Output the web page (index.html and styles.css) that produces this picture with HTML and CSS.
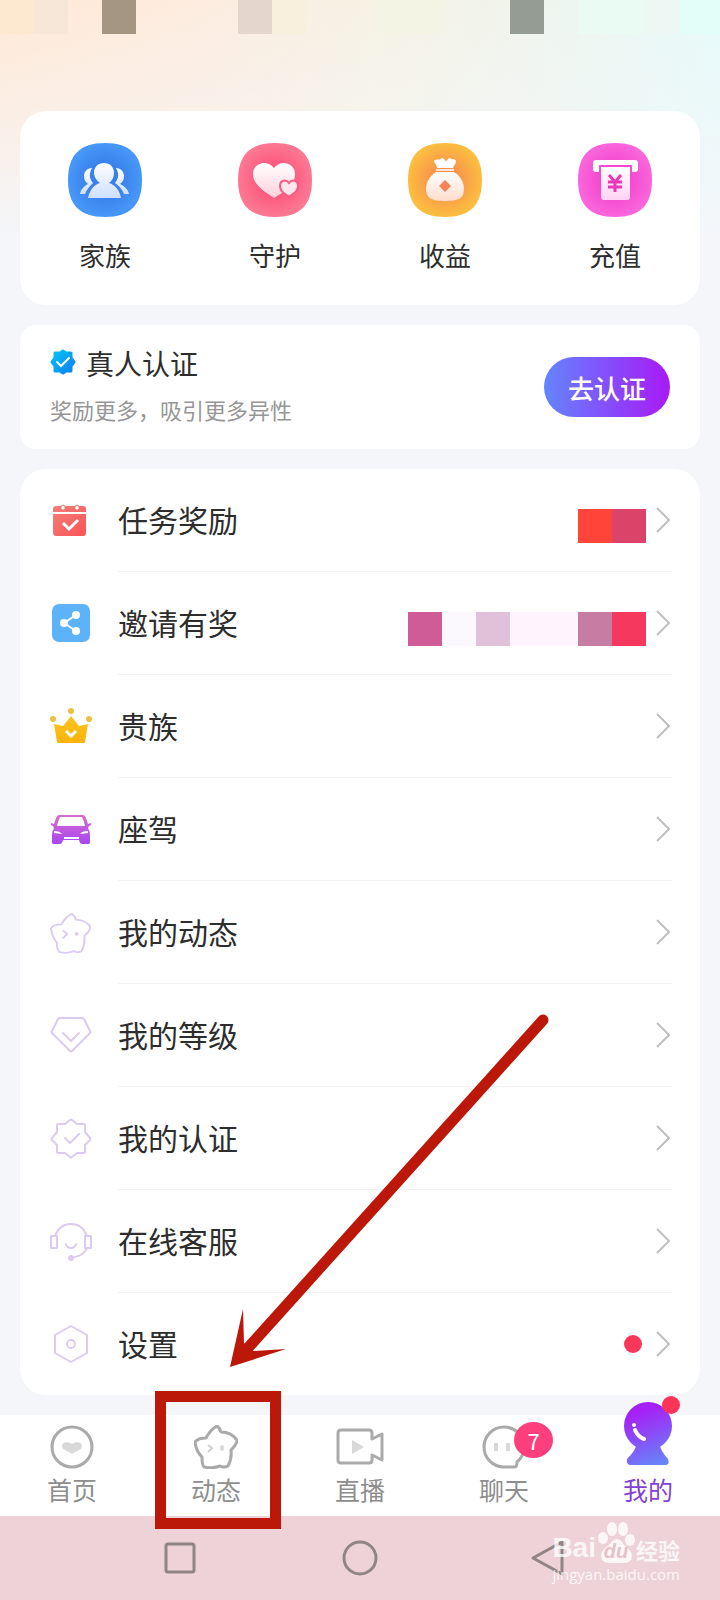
FILE: index.html
```html
<!DOCTYPE html>
<html lang="zh-CN">
<head>
<meta charset="utf-8">
<meta name="viewport" content="width=device-width, initial-scale=1">
<title>我的</title>
<link rel="stylesheet" href="styles.css">
</head>
<body>
<div class="screen">
  <header class="status" aria-hidden="true">
    <span class="cell c-sand"></span><span class="cell c-oat"></span><span class="cell"></span><span class="cell c-brown"></span><span class="cell"></span><span class="cell"></span><span class="cell"></span><span class="cell c-rose"></span><span class="cell c-cream"></span><span class="cell"></span><span class="cell"></span><span class="cell c-lime"></span><span class="cell c-lime"></span><span class="cell"></span><span class="cell"></span><span class="cell c-gray"></span><span class="cell"></span><span class="cell c-mint"></span><span class="cell c-mint"></span><span class="cell c-fog"></span><span class="cell c-aqua"></span>
  </header>

  <main class="content">
    <nav class="card shortcuts">
      <a class="shortcut" href="#">
        <svg class="tile" viewBox="0 0 74 74">
          <defs>
            <radialGradient id="gBlue"><stop offset="0.4" stop-color="#3880ea"/><stop offset="1" stop-color="#4797f9"/></radialGradient>
            <linearGradient id="gIce" x1="0" y1="0" x2="0" y2="1"><stop offset="0" stop-color="#fff"/><stop offset="1" stop-color="#cfdffb"/></linearGradient>
          </defs>
          <path fill="url(#gBlue)" d="M37 0C62 0 74 12 74 37S62 74 37 74 0 62 0 37 12 0 37 0Z"/>
          <path fill="url(#gIce)" d="M24 25c-5 0-8 4-8 8 0 3 1 6 4 8-4 2-7 5-8 10h5c2-5 5-8 8-11-4-5-4-10-1-15ZM48 25c5 0 8 4 8 8 0 3-1 6-4 8 4 2 8 5 9 10h-5c-2-5-5-8-9-11 4-5 4-10 1-15Z"/>
          <path fill="url(#gIce)" d="M36 20c6 0 10 4 10 10 0 4-2 8-5 10 6 2 10 6 12 15H20c2-9 6-13 12-15-3-2-6-6-6-10 0-6 4-10 10-10Z"/>
        </svg>
        <span class="shortcut-name">家族</span>
      </a>
      <a class="shortcut" href="#">
        <svg class="tile" viewBox="0 0 74 74">
          <defs>
            <radialGradient id="gPink"><stop offset="0.3" stop-color="#fb5379"/><stop offset="1" stop-color="#fc7893"/></radialGradient>
            <linearGradient id="gBlush" x1="0" y1="0" x2="0" y2="1"><stop offset="0" stop-color="#fff"/><stop offset="1" stop-color="#ffd0da"/></linearGradient>
          </defs>
          <path fill="url(#gPink)" d="M37 0C62 0 74 12 74 37S62 74 37 74 0 62 0 37 12 0 37 0Z"/>
          <path fill="url(#gBlush)" d="M36 55C25 48 15 41 15 31c0-11 14-15 21-6 7-9 21-5 21 6 0 12-10 17-21 24Z"/>
          <path fill="#ffe6ec" stroke="#f75c80" stroke-width="2" d="M51 54c-5-4-9-6-9-11 0-6 6-7 9-3 3-4 9-3 9 3 0 5-4 7-9 11Z"/>
        </svg>
        <span class="shortcut-name">守护</span>
      </a>
      <a class="shortcut" href="#">
        <svg class="tile" viewBox="0 0 74 74">
          <defs>
            <radialGradient id="gGold"><stop offset="0.3" stop-color="#f7914d"/><stop offset="1" stop-color="#fcbe3f"/></radialGradient>
            <linearGradient id="gCream" x1="0" y1="0" x2="0" y2="1"><stop offset="0" stop-color="#fff"/><stop offset="1" stop-color="#ffdccb"/></linearGradient>
          </defs>
          <path fill="url(#gGold)" d="M37 0C62 0 74 12 74 37S62 74 37 74 0 62 0 37 12 0 37 0Z"/>
          <path fill="#fff" d="M29 25c0-3-3-5-3-7 2-3 6 0 8-3 2 0 3 3 4 3s2-3 4-3c1 2 5 0 6 3 0 3-2 4-3 7Z"/>
          <path fill="#ffe3d4" d="M28 26h18v2H28Z"/>
          <path fill="url(#gCream)" d="M28 29h18c6 4 10 10 10 17 0 9-5 12-19 12s-19-3-19-12c0-7 4-13 10-17Z"/>
          <path fill="#f68355" d="m37 37 6 6-6 6-6-6Z"/>
        </svg>
        <span class="shortcut-name">收益</span>
      </a>
      <a class="shortcut" href="#">
        <svg class="tile" viewBox="0 0 74 74">
          <defs>
            <radialGradient id="gMagenta"><stop offset="0.3" stop-color="#f144cc"/><stop offset="1" stop-color="#fb65dc"/></radialGradient>
            <linearGradient id="gPetal" x1="0" y1="0" x2="0" y2="1"><stop offset="0" stop-color="#fff"/><stop offset="1" stop-color="#ffd3f5"/></linearGradient>
          </defs>
          <path fill="url(#gMagenta)" d="M37 0C62 0 74 12 74 37S62 74 37 74 0 62 0 37 12 0 37 0Z"/>
          <path fill="#fff" d="M18 17h39q3 0 3 3v6q0 3-3 3h-3v-7H21v7h-3q-3 0-3-3v-6q0-3 3-3Z"/>
          <path fill="url(#gPetal)" d="M23 24h29v30q0 3-3 3H26q-3 0-3-3Z"/>
          <path fill="none" stroke="#e838b8" stroke-width="3" d="m31 32 6 7 6-7M30 39h14M30 44h14M37 39v10"/>
        </svg>
        <span class="shortcut-name">充值</span>
      </a>
    </nav>

    <section class="card verify">
      <div class="verify-text">
        <h2 class="verify-title">
          <svg class="seal" viewBox="0 0 26 26">
            <defs><linearGradient id="gSeal" x1="0" y1="0" x2="1" y2="1"><stop offset="0" stop-color="#06c6f4"/><stop offset="1" stop-color="#0a7ef5"/></linearGradient></defs>
            <path fill="url(#gSeal)" stroke="url(#gSeal)" stroke-width="3" stroke-linejoin="round" d="m13 2 3 2h5v5l3 4-3 4v5h-5l-3 2-3-2H5v-5l-3-4 3-4V4h5Z"/>
            <path fill="none" stroke="#fff" stroke-width="2" stroke-linecap="round" d="m7 13 4 4 8-8"/>
          </svg>
          真人认证
        </h2>
        <p class="verify-note">奖励更多，吸引更多异性</p>
      </div>
      <button class="verify-button" type="button">去认证</button>
    </section>

    <ul class="card menu">
      <li class="menu-item">
        <svg class="menu-icon" viewBox="0 0 42 42">
          <defs><linearGradient id="gRed" x1="0" y1="0" x2="1" y2="1"><stop offset="0" stop-color="#f08078"/><stop offset="1" stop-color="#fb5358"/></linearGradient></defs>
          <path fill="url(#gRed)" d="M6 6h5v2q2 3 4 0V6h10v2q2 3 4 0V6h4q3 0 3 3v3H3V9q0-3 3-3ZM3 14h33v18q0 4-3 4H6q-3 0-3-4Z"/>
          <path fill="none" stroke="#ee7772" stroke-width="1" d="M11 8V6q2-2 4 0v2M25 8V6q2-2 4 0v2"/>
          <path fill="none" stroke="#fff" stroke-width="3" d="m13 23 6 6 9-9"/>
        </svg>
        <a class="menu-link" href="#"><span>任务奖励</span>
          <span class="mosaic"><i class="block m-red"></i><i class="block m-crimson"></i></span>
          <svg class="chevron" viewBox="0 0 14 26"><path d="m1 1 12 12L1 25"/></svg></a>
      </li>
      <li class="menu-item">
        <svg class="menu-icon" viewBox="0 0 42 42">
          <rect x="2" y="1" width="38" height="38" rx="7" fill="#5cb3fa"/>
          <path fill="none" stroke="#fff" stroke-width="2" d="M26 12 14 20l12 8"/>
          <circle cx="26" cy="12" r="4" fill="#fff"/><circle cx="14" cy="20" r="4" fill="#fff"/><circle cx="26" cy="28" r="4" fill="#fff"/>
        </svg>
        <a class="menu-link" href="#"><span>邀请有奖</span>
          <span class="mosaic"><i class="block m-plum"></i><i class="block m-pale"></i><i class="block m-lilac"></i><i class="block m-blush"></i><i class="block m-blush"></i><i class="block m-mauve"></i><i class="block m-scarlet"></i></span>
          <svg class="chevron" viewBox="0 0 14 26"><path d="m1 1 12 12L1 25"/></svg></a>
      </li>
      <li class="menu-item">
        <svg class="menu-icon" viewBox="0 0 42 42">
          <defs><linearGradient id="gCrown" x1="0" y1="0" x2="0" y2="1"><stop offset="0" stop-color="#f9c41f"/><stop offset="1" stop-color="#fcb30c"/></linearGradient></defs>
          <path fill="url(#gCrown)" d="m4 18 9 2 8-10 8 10 9-2-3 18q0 1-1 1H8q-1 0-1-1Z"/>
          <g fill="#ecc044"><circle cx="21" cy="5" r="3"/><circle cx="3" cy="13" r="3"/><circle cx="39" cy="13" r="3"/></g>
          <path fill="none" stroke="#fff" stroke-width="3" d="m16 25 5 5 5-5"/>
        </svg>
        <a class="menu-link" href="#"><span>贵族</span>
          <svg class="chevron" viewBox="0 0 14 26"><path d="m1 1 12 12L1 25"/></svg></a>
      </li>
      <li class="menu-item">
        <svg class="menu-icon" viewBox="0 0 42 42">
          <defs><linearGradient id="gCar" x1="0" y1="0" x2="0" y2="1"><stop offset="0" stop-color="#d66fcb"/><stop offset="1" stop-color="#a846f2"/></linearGradient></defs>
          <path fill="url(#gCar)" fill-rule="evenodd" d="M9 6h24q2 0 3 3l2 6 3-1q1 2-2 3l-1 2q2 3 2 8v7q0 1-2 1h-6q-2 0-3-4H13q-1 4-3 4H4q-2 0-2-1v-7q0-5 2-8l-1-2q-3-1-2-3l3 1 2-6q1-3 3-3Zm1 2q-2 4-3 9h28q-1-5-3-9ZM4 22v2l8 1q-2-3-8-3Zm34 0q-6 0-8 3l8-1ZM14 28v2h15v-2Z"/>
        </svg>
        <a class="menu-link" href="#"><span>座驾</span>
          <svg class="chevron" viewBox="0 0 14 26"><path d="m1 1 12 12L1 25"/></svg></a>
      </li>
      <li class="menu-item">
        <svg class="menu-icon outline" viewBox="0 0 44 44">
          <path d="M23 2q3 2 4 6 9 0 15 7 1 4-6 10 1 9-3 16-4 2-8 0-8 3-15 1-3-2-3-10-5-6-6-15 3-4 11-4 5-9 11-11Z"/>
          <path d="m14 20 4 3-4 4"/><circle class="dot" cx="28" cy="23" r="1"/>
        </svg>
        <a class="menu-link" href="#"><span>我的动态</span>
          <svg class="chevron" viewBox="0 0 14 26"><path d="m1 1 12 12L1 25"/></svg></a>
      </li>
      <li class="menu-item">
        <svg class="menu-icon outline" viewBox="0 0 42 42">
          <path d="M10 3h22q1 0 2 1l6 12q1 1 0 2L22 36q-1 1-2 0L2 18q-1-1 0-2L8 4q1-1 2-1Z"/><path d="m13 18 8 8 8-8"/>
        </svg>
        <a class="menu-link" href="#"><span>我的等级</span>
          <svg class="chevron" viewBox="0 0 14 26"><path d="m1 1 12 12L1 25"/></svg></a>
      </li>
      <li class="menu-item">
        <svg class="menu-icon outline" viewBox="0 0 42 42">
          <path d="M20 2q1-1 2 0l5 4h7q1 0 1 1v7l5 6q1 1 0 2l-5 5v7q0 1-1 1h-7l-5 4q-1 1-2 0l-5-4H8q-1 0-1-1v-7l-5-5q-1-1 0-2l5-6V7q0-1 1-1h7Z"/><path d="m15 20 5 5 9-9"/>
        </svg>
        <a class="menu-link" href="#"><span>我的认证</span>
          <svg class="chevron" viewBox="0 0 14 26"><path d="m1 1 12 12L1 25"/></svg></a>
      </li>
      <li class="menu-item">
        <svg class="menu-icon outline" viewBox="0 0 42 42">
          <path d="M5 15C8 7 14 3 21 3s13 4 16 12M1 15h6v12H1ZM35 15h6v12h-6ZM37 27q-3 8-16 10M16 23q1 4 5 4t5-4"/><circle class="dot" cx="21" cy="37" r="2"/>
        </svg>
        <a class="menu-link" href="#"><span>在线客服</span>
          <svg class="chevron" viewBox="0 0 14 26"><path d="m1 1 12 12L1 25"/></svg></a>
      </li>
      <li class="menu-item">
        <svg class="menu-icon outline" viewBox="0 0 42 42">
          <path d="m21 3 16 9v18l-16 9-16-9V12Z"/><circle cx="21" cy="21" r="4"/>
        </svg>
        <a class="menu-link" href="#"><span>设置</span>
          <span class="alert"></span>
          <svg class="chevron" viewBox="0 0 14 26"><path d="m1 1 12 12L1 25"/></svg></a>
      </li>
    </ul>

    <svg class="arrow" viewBox="0 0 320 352">
      <path stroke="#bc180a" stroke-width="11" stroke-linecap="round" d="M313 5 17 334"/>
      <path fill="#bc180a" d="m0 352 13-58 1 34 9 8 33-2Z"/>
    </svg>
  </main>

  <nav class="tabs">
    <a class="tab" href="#">
      <svg class="tab-icon" viewBox="0 0 44 44"><circle cx="22" cy="22" r="20"/><path class="soft" d="M22 29c-4-3-10-4-10-8s7-5 10-2c3-3 10-2 10 2s-6 5-10 8Z"/></svg>
      <span>首页</span>
    </a>
    <a class="tab" href="#">
      <svg class="tab-icon" viewBox="0 0 44 44"><path d="M23 1q3 2 4 6 10 0 16 8 0 4-6 10 1 9-3 16-4 2-8 0-8 3-16 1-2-2-2-10-6-6-7-15 3-4 11-4 5-9 11-12Z"/><path class="soft-line" d="m14 20 4 3-4 4"/><ellipse class="soft" cx="28" cy="23" rx="2" ry="3"/></svg>
      <span>动态</span>
      <i class="frame"></i>
    </a>
    <a class="tab" href="#">
      <svg class="tab-icon wide" viewBox="0 0 48 44"><path d="M5 5h28q3 0 3 3v6l10-5v26l-10-5v5q0 3-3 3H5q-3 0-3-3V8q0-3 3-3Z"/><path class="soft" d="m16 15 12 7-12 7Z"/></svg>
      <span>直播</span>
    </a>
    <a class="tab" href="#">
      <svg class="tab-icon" viewBox="0 0 44 44"><path d="M22 2a20 20 0 1 0 0 40h11q2 0 2-5 7-6 7-15A20 20 0 0 0 22 2Z"/><path class="soft" d="M12 18h4v8h-4ZM24 18h4v8h-4Z"/></svg>
      <span>聊天</span>
      <b class="badge">7</b>
    </a>
    <a class="tab active" href="#">
      <svg class="orb" viewBox="0 0 48 63">
        <defs><linearGradient id="gOrb" gradientUnits="userSpaceOnUse" x1="14" y1="4" x2="36" y2="62"><stop offset="0.1" stop-color="#a621f5"/><stop offset="1" stop-color="#6784fa"/></linearGradient></defs>
        <circle cx="24" cy="24" r="24" fill="url(#gOrb)"/>
        <path fill="url(#gOrb)" d="M12 40h24v4q1 5 8 13 2 6-3 6H7q-5 0-4-6 8-8 9-13Z"/>
        <circle cx="10" cy="23" r="2" fill="#fff"/><path fill="none" stroke="#fff" stroke-width="4" stroke-linecap="round" d="M11 28q3 7 9 9"/>
      </svg>
      <span>我的</span>
      <i class="tab-dot"></i>
    </a>
  </nav>

  <footer class="system">
    <button class="system-key" type="button" aria-label="任务"><svg viewBox="0 0 36 36"><rect x="4" y="4" width="28" height="28" rx="2"/></svg></button>
    <button class="system-key" type="button" aria-label="主屏"><svg viewBox="0 0 36 36"><circle cx="18" cy="18" r="16"/></svg></button>
    <button class="system-key" type="button" aria-label="返回"><svg viewBox="0 0 36 36"><path d="M40 2v32L11 18Z"/></svg></button>
    <div class="watermark">
      <div class="brand">
        <span class="brand-en">Bai</span>
        <span class="paw">
          <svg viewBox="0 0 38 42"><ellipse cx="6" cy="16" rx="5" ry="6"/><ellipse cx="15" cy="7" rx="5" ry="7"/><ellipse cx="26" cy="7" rx="5" ry="7"/><ellipse cx="33" cy="18" rx="5" ry="6"/><path d="M20 17q4 0 7 6 7 5 8 10 0 8-8 8H12q-8 0-8-8 1-5 8-10 4-6 8-6Z"/></svg>
          <em class="paw-text">du</em>
        </span>
        <span class="brand-cn">经验</span>
      </div>
      <div class="site">jingyan.baidu.com</div>
    </div>
  </footer>
</div>
</body>
</html>
```
FILE: styles.css
```css
* { box-sizing: border-box; }

body {
  margin: 0;
  background: #f4f6fa;
  color: #2d2d2d;
  font-family: "Noto Sans CJK SC", "Noto Sans", sans-serif;
}

a { color: inherit; text-decoration: none; }
button { border: 0; padding: 0; font: inherit; }

.screen {
  display: flex;
  flex-direction: column;
  min-height: 100vh;
  background:
    linear-gradient(to bottom, rgba(244, 246, 250, 0) 0, rgba(244, 246, 250, 0.4) 110px, #f4f6fa 240px),
    linear-gradient(to right, #ffe9d6 0, #fdecdf 28%, #f6f2e4 52%, #f0f4ec 72%, #e6fbfa 100%);
}

/* status strip */
.status {
  display: flex;
  height: 34px;
  margin-bottom: 77px;
  overflow: hidden;
}
.cell { flex: 0 0 34px; }
.c-sand { background: #fde8d0; }
.c-oat { background: #f7e7d9; }
.c-brown { background: #a59583; }
.c-rose { background: #e4d5cd; }
.c-cream { background: #f8efdd; }
.c-lime { background: #f3f4e4; }
.c-gray { background: #949c93; }
.c-mint { background: #e9fbf2; }
.c-fog { background: #edf7f4; }
.c-aqua { flex: 1 0 34px; background: #e3fdf8; }

.content {
  position: relative;
  display: flex;
  flex-direction: column;
  gap: 20px;
  padding: 0 20px 20px;
}
.card { margin: 0; background: #fff; border-radius: 26px; }

/* shortcuts */
.shortcuts { display: grid; grid-template-columns: repeat(4, 1fr); padding: 32px 0; }
.shortcut { display: flex; flex-direction: column; align-items: center; gap: 20px; }
.tile { width: 74px; height: 74px; }
.shortcut-name { font-size: 26px; line-height: 36px; }

/* verification */
.verify {
  display: flex;
  align-items: center;
  justify-content: space-between;
  padding: 20px 30px;
  border-radius: 16px;
}
.verify-text { padding-bottom: 4px; }
.verify-title {
  display: flex;
  align-items: center;
  gap: 10px;
  margin: 0 0 12px;
  font-size: 28px;
  font-weight: 400;
  line-height: 36px;
}
.seal { width: 26px; height: 26px; margin-bottom: 2px; }
.verify-note { margin: 0; color: #969696; font-size: 22px; line-height: 32px; }
.verify-button {
  width: 126px;
  height: 60px;
  border-radius: 30px;
  background: linear-gradient(to right, #6485fc, #8054fc 45%, #a91af5);
  color: #fff;
  font-size: 26px;
  font-weight: 500;
}

/* menu */
.menu { padding: 0 28px 0 30px; list-style: none; }
.menu-item { display: flex; align-items: center; gap: 26px; height: 103px; }
.menu-item:last-child { height: 102px; }
.menu-icon { flex: none; width: 42px; height: 42px; }
.outline { fill: none; stroke: #dccbf0; stroke-width: 2; stroke-linejoin: round; stroke-linecap: round; }
.outline .dot { fill: #dccbf0; }
.menu-link {
  display: flex;
  flex: 1;
  align-items: center;
  gap: 10px;
  height: 100%;
  padding-right: 2px;
  border-bottom: 1px solid #f1f2f4;
  font-size: 30px;
  line-height: 42px;
}
.menu-item:last-child .menu-link { border-bottom: 0; }
.menu-link > :first-child { margin-right: auto; padding-bottom: 2px; }
.chevron { width: 14px; height: 26px; fill: none; stroke: #bfbfbf; stroke-width: 2; }
.alert { width: 18px; height: 18px; margin-right: 4px; border-radius: 50%; background: #f9375a; }

.mosaic { display: flex; padding-top: 12px; }
.block { width: 34px; height: 34px; }
.m-red { background: #ff4439; }
.m-crimson { background: #dc4368; }
.m-plum { background: #cf5b97; }
.m-pale { background: #fbf8fe; }
.m-lilac { background: #e0c1da; }
.m-blush { background: #fdf4fd; }
.m-mauve { background: #c77ca4; }
.m-scarlet { background: #f5385d; }

/* pointer laid over the list */
.arrow {
  position: absolute;
  left: 230px;
  bottom: 48px;
  width: 320px;
  height: 352px;
  overflow: visible;
  pointer-events: none;
}

/* tab bar */
.tabs { display: grid; grid-template-columns: repeat(5, 1fr); background: #fff; }
.tab {
  position: relative;
  display: flex;
  flex-direction: column;
  align-items: center;
  justify-content: flex-end;
  gap: 2px;
  height: 101px;
  padding-bottom: 9px;
  color: #8e8e8e;
  font-size: 25px;
  line-height: 36px;
}
.tab.active { color: #8442d4; }
.tab-icon { width: 44px; height: 44px; fill: none; stroke: #aaa; stroke-width: 3; stroke-linejoin: round; }
.tab-icon.wide { width: 48px; }
.tab-icon .soft { fill: #d9d9d9; stroke: none; }
.tab-icon .soft-line { stroke: #d0d0d0; stroke-width: 2; }
.orb { flex: none; width: 48px; height: 63px; margin-bottom: 4px; }
.badge {
  position: absolute;
  top: 7px;
  left: 82px;
  width: 39px;
  height: 36px;
  border-radius: 50%;
  background: #fd3f7d;
  color: #fff;
  font-size: 22px;
  font-weight: 400;
  line-height: 36px;
  text-align: center;
}
.tab-dot {
  position: absolute;
  top: -19px;
  right: 40px;
  width: 18px;
  height: 18px;
  border-radius: 50%;
  background: #fb3357;
}
.frame {
  position: absolute;
  z-index: 1;
  inset: -24px 7px -13px 11px;
  border: 11px solid #bc180a;
}

/* system keys */
.system {
  position: relative;
  display: flex;
  flex: 1;
  justify-content: center;
  gap: 144px;
  min-height: 84px;
  padding-top: 24px;
  background: #edd3d8;
}
.system-key { width: 36px; height: 36px; background: none; }
.system-key svg { display: block; overflow: visible; fill: none; stroke: #918584; stroke-width: 3; stroke-linejoin: round; }

.watermark {
  position: absolute;
  top: 6px;
  right: 40px;
  color: rgba(255, 255, 255, 0.8);
}
.brand {
  display: flex;
  align-items: flex-end;
  justify-content: space-between;
  height: 42px;
  font-weight: 700;
}
.brand-en { font-family: "Liberation Sans", sans-serif; font-size: 28px; line-height: 32px; }
.brand-cn { font-size: 22px; line-height: 30px; }
.paw { position: relative; width: 38px; height: 42px; }
.paw svg { display: block; fill: rgba(255, 255, 255, 0.8); }
.paw-text {
  position: absolute;
  inset: auto 0 2px;
  color: #e3c3c9;
  font-family: "Liberation Sans", sans-serif;
  font-size: 20px;
  line-height: 22px;
  text-align: center;
}
.site { font-family: "Open Sans", sans-serif; font-size: 15px; line-height: 20px; }
```
